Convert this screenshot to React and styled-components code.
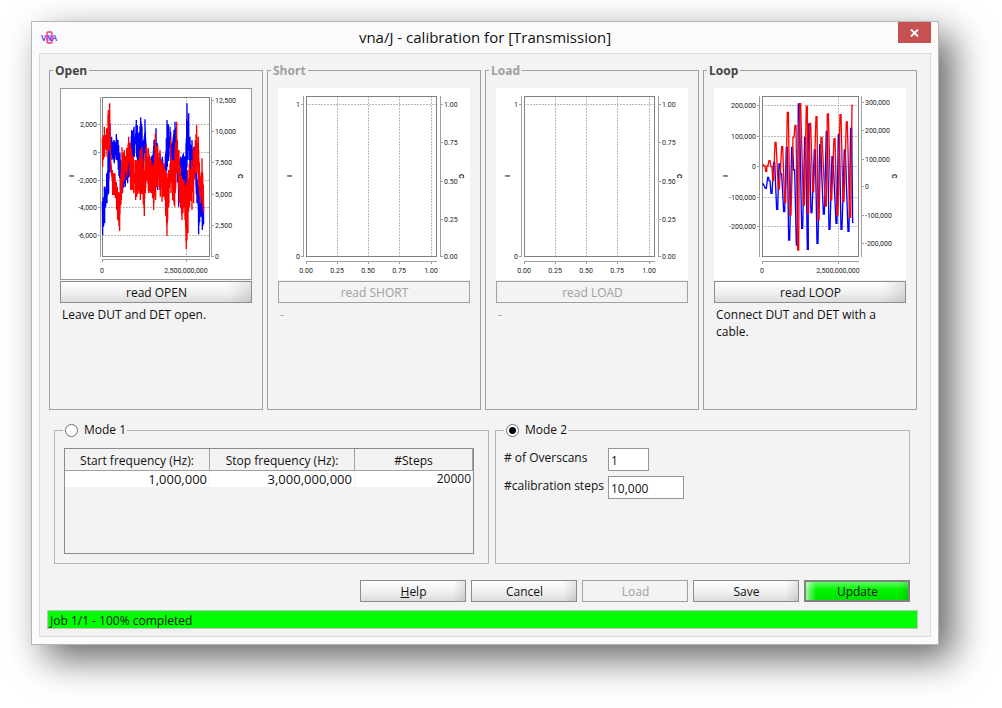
import styled, { createGlobalStyle } from "styled-components";
import { useState } from "react";

const GlobalStyle = createGlobalStyle`
  * {
    box-sizing: border-box;
  }

  body {
    margin: 0;
    padding: 21px 63px 62px 31px;
    background: #fff;
    color: #111;
    font-family: "Open Sans", "Noto Sans", sans-serif;
    font-size: 12px;
    line-height: 17px;
  }

  button,
  input {
    font: inherit;
    color: inherit;
  }
`;

const Window = styled.div`
  padding: 0 7px 7px;
  background: #fbfbfb;
  border: 1px solid #b6b6b6;
  box-shadow: 14px 14px 35px rgba(0, 0, 0, 0.6);
`;

const TitleBar = styled.header`
  display: grid;
  grid-template-columns: 33px 1fr 33px;
  height: 31px;
`;

const AppIcon = styled.svg`
  width: 18px;
  height: 16px;
  margin: 8px 0 0 2px;
`;

const Title = styled.h1`
  margin: 0;
  font-size: 15px;
  font-weight: normal;
  line-height: 31px;
  text-align: center;
  white-space: nowrap;
`;

const CloseButton = styled.button`
  display: flex;
  align-items: center;
  justify-content: center;
  height: 21px;
  padding: 0;
  border: 0;
  background: #c75050;
`;

const Content = styled.main`
  padding: 9px 12px 7px 7px;
  background: #f3f3f3;
  border: 1px solid #dcdcdc;
`;

const Panels = styled.div`
  display: grid;
  grid-template-columns: repeat(4, 1fr);
  gap: 4px;
  padding: 0 1px 0 2px;
`;

const PanelBox = styled.fieldset`
  min-width: 0;
  margin: 0;
  padding: 0;
  border: 1px solid #a0a0a0;
  color: ${(props) => (props.disabled ? "#a0a0a0" : "#111")};
`;

const PanelTitle = styled.legend`
  margin-left: 3px;
  padding: 1px 2px 0;
  line-height: 14px;
  font-weight: bold;
  color: ${(props) => (props.$dim ? "#a0a0a0" : "#444")};
`;

const PanelBody = styled.div`
  padding: 10px 10px 0;
`;

const Chart = styled.svg`
  display: block;
  width: 100%;
  margin-bottom: 1px;
  background: #fff;
  outline: ${(props) => (props.$framed ? "1px solid #999" : "none")};
  outline-offset: -1px;
  font-family: Roboto, "Liberation Sans", sans-serif;
  font-size: 7px;
`;

const Button = styled.button`
  height: 22px;
  padding: 1px 0 0 1px;
  border: 1px solid #8c8c8c;
  background: linear-gradient(to right, transparent 88%, rgba(0, 0, 0, 0.1)),
    linear-gradient(#fdfdfd, #f2f2f2 50%, #dcdcdc);
  line-height: 19px;

  &:disabled {
    background: #f3f3f3;
    border-color: #a0a0a0;
    color: #a0a0a0;
  }
`;

const ReadButton = styled(Button)`
  width: 100%;
`;

const UpdateButton = styled(Button)`
  border: 2px solid #808080;
  background: linear-gradient(to right, rgba(255, 255, 255, 0.6), transparent 10%, transparent 90%, rgba(0, 0, 0, 0.1)),
    linear-gradient(#5cff5c, #00f400 45%, #00e400);
  line-height: 17px;
`;

const Hint = styled.p`
  min-height: 106px;
  margin: 0;
  padding: 3px 2px 0;
`;

const Modes = styled.div`
  display: grid;
  grid-template-columns: 435fr 415fr;
  gap: 6px;
  padding: 12px 8px 16px 7px;
`;

const ModeBox = styled.fieldset`
  min-width: 0;
  margin: 0;
  padding: 10px 14px 9px 8px;
  border: 1px solid #b4b4b4;
`;

const ModeTitle = styled.legend`
  padding: 0 1px 0 2px;
  line-height: 16px;

  label {
    display: flex;
    align-items: center;
    gap: 6px;
  }
`;

const Radio = styled.input`
  appearance: none;
  width: 13px;
  height: 13px;
  margin: 0;
  border: 1px solid #707070;
  border-radius: 50%;
  background: #fff;

  &:checked {
    background: radial-gradient(#000 0 3px, #fff 4px);
  }
`;

const TableBox = styled.div`
  height: 106px;
  margin-left: 1px;
  border: 1px solid #8c8c8c;
`;

const Table = styled.table`
  width: 100%;
  border-collapse: separate;
  border-spacing: 0;
  table-layout: fixed;

  th {
    height: 22px;
    padding: 2px 0 0;
    border-right: 1px solid #a0a0a0;
    border-bottom: 1px solid #a0a0a0;
    font-weight: normal;
    line-height: 17px;
  }

  th:last-child {
    width: 118px;
  }

  td {
    padding: 0 2px;
    border-right: 1px solid #f3f3f3;
    background: #fff;
    line-height: 16px;
    text-align: right;
  }

  td:last-child {
    padding-right: 1px;
  }
`;

const Frequency = styled.td`
  font-size: 13px;
`;

const Settings = styled.div`
  display: grid;
  grid-template-columns: 104px 1fr;
  gap: 5px 0;

  label {
    padding-top: 1px;
    white-space: nowrap;
  }
`;

const Field = styled.input`
  width: ${(props) => props.$width};
  height: 23px;
  padding: 2px 2px 0;
  border: 1px solid #969696;
  border-radius: 0;
  background: #fff;
`;

const Actions = styled.div`
  display: grid;
  grid-template-columns: repeat(5, 106px);
  justify-content: end;
  gap: 5px;
  padding-right: 8px;
`;

const Status = styled.div`
  height: 19px;
  margin-top: 8px;
  padding: 1px 2px 0;
  border: 1px solid #b8c8b8;
  background: #00ff00;
  line-height: 18px;
`;

// fills the band between the high and low edge with a jagged line
const jagged = (band) => {
  const points = [];
  let seed = 7;
  for (let i = 0; i < band.length - 1; i++) {
    const [x0, hi0, lo0] = band[i];
    const [x1, hi1, lo1] = band[i + 1];
    for (let x = x0; x < x1; x++) {
      const t = (x - x0) / (x1 - x0);
      const hi = hi0 + (hi1 - hi0) * t;
      const lo = lo0 + (lo1 - lo0) * t;
      seed = (seed * 16807) % 2147483647;
      const jitter = x === x0 ? 0 : (seed / 2147483647) * (lo - hi) * 0.45;
      points.push(`${x},${Math.round(hi + jitter)}`, `${x + 1},${Math.round(lo - jitter)}`);
    }
  }
  return points.join(" ");
};

// every sample is held for a moment, so the peaks are flat
const stepped = (samples) =>
  samples.map(([x, y]) => `${x - 1},${y} ${x + 2},${y}`).join(" ");

const OPEN_BLUE = jagged([
  [187, 425, 525], [193, 380, 490], [200, 340, 430], [205, 270, 400], [210, 190, 330],
  [215, 230, 300], [222, 240, 310], [229, 222, 300], [234, 240, 330], [240, 280, 390],
  [247, 320, 398], [255, 300, 380], [262, 290, 370], [270, 280, 350], [275, 210, 340],
  [282, 200, 290], [289, 180, 290], [296, 220, 330], [302, 172, 280], [306, 200, 300],
  [309, 260, 330], [315, 178, 280], [318, 250, 340], [325, 300, 380], [335, 290, 360],
  [342, 240, 350], [348, 205, 290], [352, 250, 390], [360, 280, 340], [367, 290, 380],
  [375, 310, 390], [381, 180, 320], [390, 200, 290], [397, 250, 330], [405, 185, 300],
  [409, 230, 340], [415, 300, 440], [422, 290, 380], [430, 280, 380], [437, 290, 400],
  [441, 130, 300], [446, 160, 300], [450, 230, 370], [456, 240, 320], [463, 260, 350],
  [470, 300, 430], [475, 360, 523], [480, 380, 470], [486, 370, 510], [491, 400, 517],
]);

const OPEN_RED = jagged([
  [187, 235, 320], [193, 200, 290], [200, 205, 290], [205, 150, 270], [209, 130, 270],
  [212, 280, 340], [217, 330, 405], [225, 340, 415], [232, 380, 480], [238, 400, 513],
  [243, 340, 420], [246, 262, 400], [253, 270, 360], [260, 265, 350], [266, 230, 310],
  [271, 250, 390], [280, 290, 400], [286, 300, 420], [293, 300, 400], [300, 270, 420],
  [306, 260, 400], [312, 330, 468], [318, 255, 360], [325, 265, 400], [333, 300, 400],
  [340, 310, 450], [346, 220, 420], [353, 255, 380], [360, 270, 410], [365, 300, 425],
  [372, 310, 410], [380, 340, 528], [386, 330, 430], [392, 235, 400], [397, 300, 420],
  [403, 300, 440], [410, 185, 340], [417, 270, 430], [425, 350, 480], [432, 360, 440],
  [438, 380, 568], [443, 330, 520], [448, 310, 440], [455, 300, 450], [460, 260, 430],
  [466, 240, 340], [470, 195, 340], [475, 230, 380], [480, 350, 430], [486, 295, 430],
  [491, 360, 500],
]);

const LOOP_BLUE = stepped([
  [188, 372], [197, 385], [204, 352], [208, 362], [214, 400], [222, 307], [231, 448], [238, 312],
  [243, 342], [252, 455], [260, 262], [267, 540], [276, 262], [282, 330], [290, 555],
  [296, 132], [306, 505], [315, 232], [323, 568], [325, 192], [334, 458], [344, 270],
  [352, 550], [360, 255], [371, 462], [380, 214], [388, 508], [397, 290], [409, 490],
  [416, 224], [424, 508], [434, 270], [445, 514], [453, 205], [459, 487],
]);

const LOOP_RED = stepped([
  [188, 314], [193, 318], [198, 334], [202, 318], [208, 302], [214, 320], [219, 362],
  [226, 247], [236, 387], [246, 260], [255, 428], [263, 157], [271, 465], [280, 232],
  [286, 196], [294, 570], [300, 131], [311, 435], [320, 139], [324, 460], [330, 190],
  [339, 395], [349, 170], [355, 480], [364, 232], [377, 438], [383, 162], [393, 420],
  [403, 236], [412, 465], [421, 164], [430, 425], [440, 186], [450, 472], [457, 136],
]);

const EMPTY_CHART = {
  plot: [28, 8, 158, 168],
  axes: [25, 162, 173],
  sideLabel: 181,
  left: [["1", 16], ["0", 168]],
  right: [["1.00", 16], ["0.75", 54], ["0.50", 93], ["0.25", 131], ["0.00", 168]],
  bottom: [["0.00", 28], ["0.25", 59], ["0.50", 90], ["0.75", 121], ["1.00", 153]],
};

const PANELS = [
  {
    title: "Open",
    button: "read OPEN",
    hint: "Leave DUT and DET open.",
    framed: true,
    chart: {
      plot: [42, 9, 149, 168],
      axes: [40, 151, 171],
      sideLabel: 178,
      left: [["2,000", 36], ["0", 64], ["-2,000", 92], ["-4,000", 119], ["-6,000", 147]],
      right: [["12,500", 12], ["10,000", 43], ["7,500", 74], ["5,000", 106], ["2,500", 137], ["0", 168]],
      bottom: [["0", 42], ["2,500,000,000", 126]],
      blue: OPEN_BLUE,
      red: OPEN_RED,
      shift: "translate(-20 -28) scale(0.3333)",
    },
  },
  { title: "Short", button: "read SHORT", hint: "-", disabled: true, chart: EMPTY_CHART },
  { title: "Load", button: "read LOAD", hint: "-", disabled: true, chart: EMPTY_CHART },
  {
    title: "Loop",
    button: "read LOOP",
    hint: "Connect DUT and DET with a cable.",
    chart: {
      plot: [48, 8, 144, 168],
      axes: [45, 147, 173],
      sideLabel: 178,
      left: [["200,000", 17], ["100,000", 48], ["0", 78], ["-100,000", 109], ["-200,000", 138]],
      right: [["300,000", 14], ["200,000", 42], ["100,000", 71], ["0", 98], ["-100,000", 127], ["-200,000", 155]],
      bottom: [["0", 48], ["2,500,000,000", 124]],
      blue: LOOP_BLUE,
      red: LOOP_RED,
      shift: "translate(-14 -28) scale(0.3333)",
    },
  },
];

const SweepChart = ({ chart, framed }) => {
  const [x0, y0, x1, y1] = chart.plot;
  const [axisLeft, axisRight, axisBottom] = chart.axes;

  return (
    <Chart viewBox="0 0 192 192" $framed={framed}>
      <g stroke="#b8b8b8" strokeDasharray="2 1">
        {chart.left.map(([label, y]) => (
          <path key={label} d={`M${x0} ${y + 0.5}H${x1}`} />
        ))}
        {chart.bottom.map(([label, x]) => (
          <path key={label} d={`M${x + 0.5} ${y0}V${y1}`} />
        ))}
      </g>
      <g stroke="#a0a0a0" fill="none">
        <rect x={x0 + 0.5} y={y0 + 0.5} width={x1 - x0} height={y1 - y0} stroke="#808080" />
        <path d={`M${axisLeft + 0.5} ${y0}V${y1 + 1}M${axisRight + 0.5} ${y0}V${y1 + 1}`} />
        <path d={`M${x0} ${axisBottom + 0.5}H${x1 + 1}`} />
        {chart.left.map(([label, y]) => (
          <path key={label} d={`M${axisLeft - 2} ${y + 0.5}h2`} />
        ))}
        {chart.right.map(([label, y]) => (
          <path key={label} d={`M${axisRight + 1} ${y + 0.5}h2`} />
        ))}
        {chart.bottom.map(([label, x]) => (
          <path key={label} d={`M${x + 0.5} ${axisBottom + 1}v2`} />
        ))}
      </g>
      <g fill="#222">
        {chart.left.map(([label, y]) => (
          <text key={label} x={axisLeft - 3} y={y + 3} textAnchor="end">{label}</text>
        ))}
        {chart.right.map(([label, y]) => (
          <text key={label} x={axisRight + 4} y={y + 3}>{label}</text>
        ))}
        {chart.bottom.map(([label, x]) => (
          <text key={label} x={x} y={185} textAnchor="middle">{label}</text>
        ))}
        <g fontWeight="bold">
          <text transform="translate(14 89) rotate(-90)">I</text>
          <text transform={`translate(${chart.sideLabel} 86) rotate(90)`}>C</text>
        </g>
      </g>
      {chart.red && (
        <g transform={chart.shift} fill="none" strokeWidth="4">
          <polyline points={chart.blue} stroke="#00f" />
          <polyline points={chart.red} stroke="#f00" />
        </g>
      )}
    </Chart>
  );
};

const Panel = ({ title, button, hint, disabled, framed, chart }) => (
  <PanelBox disabled={disabled}>
    <PanelTitle $dim={disabled}>{title}</PanelTitle>
    <PanelBody>
      <SweepChart chart={chart} framed={framed} />
      <ReadButton disabled={disabled}>{button}</ReadButton>
      <Hint>{hint}</Hint>
    </PanelBody>
  </PanelBox>
);

const App = () => {
  const [mode, setMode] = useState(2);

  return (
    <>
      <GlobalStyle />
      <Window>
        <TitleBar>
          <AppIcon viewBox="0 0 18 16">
            <text x="0" y="11" fontSize="9" fontWeight="bold" fontFamily="Liberation Mono, monospace" fill="#7a45f0">
              VNA
            </text>
            <rect x="6" y="2" width="5" height="11" rx="1" fill="none" stroke="#f03c78" strokeWidth="1.4" />
          </AppIcon>
          <Title>vna/J - calibration for [Transmission]</Title>
          <CloseButton aria-label="Close">
            <svg width="9" height="8" viewBox="0 0 9 8">
              <path d="M1 0.5L8 7.5M8 0.5L1 7.5" stroke="#fff" strokeWidth="1.8" />
            </svg>
          </CloseButton>
        </TitleBar>

        <Content>
          <Panels>
            {PANELS.map((panel) => (
              <Panel key={panel.title} {...panel} />
            ))}
          </Panels>

          <Modes>
            <ModeBox>
              <ModeTitle>
                <label>
                  <Radio type="radio" name="mode" checked={mode === 1} onChange={() => setMode(1)} />
                  Mode 1
                </label>
              </ModeTitle>
              <TableBox>
                <Table>
                  <thead>
                    <tr>
                      <th>Start frequency (Hz):</th>
                      <th>Stop frequency (Hz):</th>
                      <th>#Steps</th>
                    </tr>
                  </thead>
                  <tbody>
                    <tr>
                      <Frequency>1,000,000</Frequency>
                      <Frequency>3,000,000,000</Frequency>
                      <td>20000</td>
                    </tr>
                  </tbody>
                </Table>
              </TableBox>
            </ModeBox>

            <ModeBox>
              <ModeTitle>
                <label>
                  <Radio type="radio" name="mode" checked={mode === 2} onChange={() => setMode(2)} />
                  Mode 2
                </label>
              </ModeTitle>
              <Settings>
                <label htmlFor="overscans"># of Overscans</label>
                <Field id="overscans" $width="41px" defaultValue="1" />
                <label htmlFor="steps">#calibration steps</label>
                <Field id="steps" $width="76px" defaultValue="10,000" />
              </Settings>
            </ModeBox>
          </Modes>

          <Actions>
            <Button><u>H</u>elp</Button>
            <Button>Cancel</Button>
            <Button disabled>Load</Button>
            <Button>Save</Button>
            <UpdateButton>Update</UpdateButton>
          </Actions>

          <Status role="status">Job 1/1 - 100% completed</Status>
        </Content>
      </Window>
    </>
  );
};

export default App;
